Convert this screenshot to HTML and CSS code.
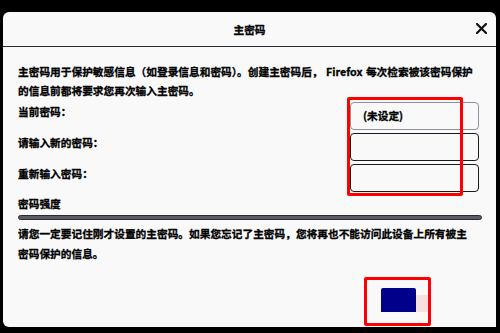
FILE: index.html
```html
<!DOCTYPE html>
<html lang="zh-CN">
<head>
<meta charset="utf-8">
<title>主密码</title>
<link rel="stylesheet" href="styles.css">
</head>
<body>
<div class="dialog">
  <div class="header">
    <span class="title">主密码</span>
    <span class="close" aria-label="关闭">
      <svg width="11" height="11" viewBox="0 0 11 11"><path d="M1 1 L10 10 M10 1 L1 10" stroke="#111" stroke-width="2.2" stroke-linecap="square"/></svg>
    </span>
  </div>
  <div class="body">
    <p class="intro">主密码用于保护敏感信息（如登录信息和密码）。创建主密码后，&nbsp;Firefox 每次检索被该密码保护<br>的信息前都将要求您再次输入主密码。</p>
    <div class="fields">
      <div class="row">
        <span class="label">当前密码：</span>
        <div class="input current">(未设定)</div>
      </div>
      <div class="row">
        <span class="label">请输入新的密码：</span>
        <div class="input"></div>
      </div>
      <div class="row">
        <span class="label">重新输入密码：</span>
        <div class="input"></div>
      </div>
      <div class="highlight fields-mark"></div>
    </div>
    <div class="strength">
      <span class="label">密码强度</span>
      <div class="meter"></div>
    </div>
    <p class="warning">请您一定要记住刚才设置的主密码。如果您忘记了主密码，您将再也不能访问此设备上所有被主<br>密码保护的信息。</p>
    <div class="footer">
      <div class="btn-wrap">
        <button class="ok" type="button"></button>
        <span class="ghost"></span>
        <div class="highlight btn-mark"></div>
      </div>
    </div>
  </div>
</div>
</body>
</html>
```
FILE: styles.css
```css
html, body {
  margin: 0;
  padding: 0;
  background: #000;
  width: 500px;
  height: 333px;
  overflow: hidden;
  font-family: "Noto Sans CJK SC", "Liberation Sans", sans-serif;
  font-weight: 700;
  color: #000;
  -webkit-text-stroke: 0.3px #000;
}
.dialog {
  margin: 12px 0 0 3px;
  width: 493px;
  height: 315px;
  background: #f9f9fa;
  border-radius: 6px 6px 0 6px;
  display: flex;
  flex-direction: column;
}
.header {
  border-bottom: 1px solid #2a2a33;
  display: flex;
  align-items: center;
  justify-content: center;
  position: relative;
  box-sizing: border-box;
  flex: 0 0 33px;
}
.title {
  font-size: 10.7px;
  line-height: 32px;
  margin-top: 2px;
}
.close {
  position: absolute;
  right: 9px;
  top: 11px;
  width: 11px;
  height: 11px;
  display: block;
}
.close svg { display: block; }
.body {
  padding: 15px 14px 0 15px;
  display: flex;
  flex-direction: column;
  flex: 1;
}
p { margin: 0; }
.intro, .warning, .label {
  font-size: 10.7px;
  line-height: 19px;
}
.intro { white-space: nowrap; word-spacing: 1px; }
.fields {
  position: relative;
  margin-top: 1.5px;
  display: flex;
  flex-direction: column;
  gap: 3px;
}
.row {
  display: flex;
  justify-content: space-between;
  align-items: flex-start;
  padding-right: 3px;
}
.input {
  width: 129px;
  height: 28px;
  box-sizing: border-box;
  border: 1px solid #1a1a1a;
  border-radius: 4px;
  background: #f9f9fa;
  font-size: 10.7px;
  line-height: 26px;
  padding-left: 12px;
}
.input.current { border-color: #8f8f9d; }
.highlight {
  position: absolute;
  border: 3px solid #ff0000;
  border-radius: 2px;
  box-sizing: border-box;
}
.fields-mark {
  left: 329px;
  top: -5px;
  width: 116px;
  height: 99px;
}
.strength {
  display: flex;
  flex-direction: column;
  margin-top: 2px;
}
.meter {
  margin-top: 2px;
  height: 5px;
  box-sizing: border-box;
  border: 1px solid #2b2a33;
  background: #5b5b66;
  border-radius: 3px;
}
.warning {
  margin-top: 4px;
  line-height: 20.5px;
  white-space: nowrap;
}
.footer {
  display: flex;
  justify-content: flex-end;
  padding-right: 51px;
}
.btn-wrap {
  position: relative;
  margin-top: 12px;
  width: 67px;
  height: 49px;
  display: flex;
  align-items: flex-end;
  padding: 11px 3px 14px 17px;
  box-sizing: border-box;
}
.ok {
  width: 35px;
  height: 24px;
  border: none;
  border-radius: 2px 2px 0 0;
  background: #00008a;
  padding: 0;
  margin: 0;
  flex: none;
}
.ghost {
  width: 12px;
  height: 17px;
  background: #f6e1e1;
  flex: none;
}
.btn-mark {
  left: 0;
  top: 0;
  width: 67px;
  height: 49px;
}
```
